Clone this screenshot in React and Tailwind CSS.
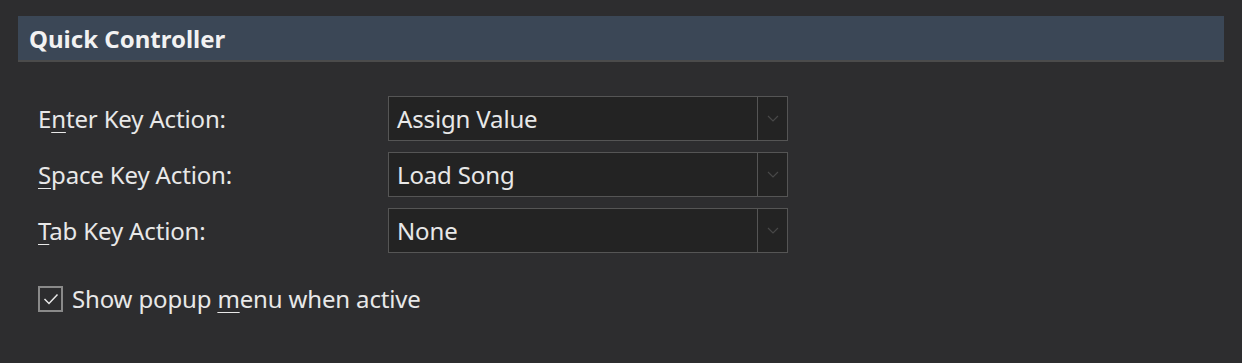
import React from "react";

const rows = [
  { pre: "E", key: "n", post: "ter Key Action:", value: "Assign Value" },
  { pre: "", key: "S", post: "pace Key Action:", value: "Load Song" },
  { pre: "", key: "T", post: "ab Key Action:", value: "None" },
];

const Chevron = () => (
  <svg width="12" height="7" viewBox="0 0 12 7" fill="none">
    <path d="M1 1l5 5 5-5" stroke="#484848" strokeWidth="1.2" />
  </svg>
);

const App = () => {
  return (
    <div
      className="w-[1242px] h-[363px] bg-[#2d2d2f] pt-4 text-[#e8e8e8]"
      style={{ fontFamily: '"Noto Sans", "Open Sans", sans-serif' }}
    >
      <div className="ml-[18px] w-[1206px] h-[46px] bg-[#3b4756] border-b-2 border-[#4b4b4b] flex items-center pl-[11px]">
        <span className="text-[24px] leading-none font-bold text-[#f2f2f2] tracking-[0px] mt-[2px]">Quick Controller</span>
      </div>

      <div className="mt-[34px] flex flex-col gap-[11px]">
        {rows.map((r) => (
          <div key={r.value} className="flex items-center">
            <div className="w-[388px] pl-[38px] text-[24px] leading-none tracking-[-0.15px]">
              {r.pre}
              <span className="underline underline-offset-[4px] decoration-1">{r.key}</span>
              {r.post}
            </div>
            <div className="w-[400px] h-[45px] bg-[#232323] border border-[#555] flex">
              <div className="flex-1 flex items-center pl-[8px] text-[24px] leading-none tracking-[-0.15px]">{r.value}</div>
              <div className="w-[30px] border-l border-[#555] flex items-center justify-center">
                <Chevron />
              </div>
            </div>
          </div>
        ))}
      </div>

      <div className="mt-[33px] ml-[38px] flex items-center gap-[9px]">
        <div className="w-[25px] h-[26px] border-2 border-[#8a8a8a] flex items-center justify-center">
          <svg width="16" height="12" viewBox="0 0 16 12" fill="none">
            <path d="M1.5 6l4.5 4.5 8.5-9" stroke="#e8e8e8" strokeWidth="1.5" />
          </svg>
        </div>
        <span className="text-[24px] leading-none tracking-[-0.15px]">
          Show popup <span className="underline underline-offset-[4px] decoration-1">m</span>enu when active
        </span>
      </div>
    </div>
  );
};

export default App;
